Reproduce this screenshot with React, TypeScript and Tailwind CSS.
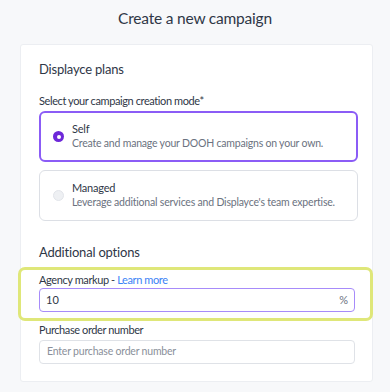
import React from "react";

export default function App() {
  return (
    <div
      className="w-[390px] h-[392px] bg-[#f7f8fa] overflow-hidden text-[#2d3748]"
      style={{ fontFamily: "Lato, 'Noto Sans', sans-serif" }}
    >
      <h1 className="text-center text-[15.5px] tracking-[-0.2px] text-[#2f3747] pt-[7px] h-[44px] leading-[22px]">
        Create a new campaign
      </h1>
      <div className="mx-[20px] w-[353px] h-[338px] bg-white rounded-[3px] border border-[#eceef2] px-[18px] pt-[14px]">
        <h2 className="text-[13px] tracking-[-0.2px] leading-[20px] text-[#2f3747]">Displayce plans</h2>
        <div className="mt-[14px] text-[11px] tracking-[-0.4px] leading-[16px] text-[#2f3747]">
          Select your campaign creation mode*
        </div>
        <div className="mt-[2px] flex flex-col gap-[8px] w-[319px]">
          <div className="h-[51px] rounded-[6px] border-2 border-[#8b5cf6] flex items-center pl-[12px]">
            <span className="w-[11px] h-[11px] rounded-full bg-[#6d28d9] flex items-center justify-center">
              <span className="w-[4px] h-[4px] rounded-full bg-white" />
            </span>
            <div className="ml-[8px] -mt-[2px]">
              <div className="text-[11px] tracking-[-0.2px] leading-[14px] text-[#2f3747]">Self</div>
              <div className="text-[10.5px] tracking-[-0.2px] leading-[14px] text-[#6b7280]">
                Create and manage your DOOH campaigns on your own.
              </div>
            </div>
          </div>
          <div className="h-[51px] rounded-[6px] border border-[#dcdfe5] flex items-center pl-[13px]">
            <span className="w-[11px] h-[11px] rounded-full bg-[#eef0f3] border border-[#e2e5ea]" />
            <div className="ml-[8px] -mt-[2px]">
              <div className="text-[11px] tracking-[-0.2px] leading-[14px] text-[#2f3747]">Managed</div>
              <div className="text-[10.5px] tracking-[-0.2px] leading-[14px] text-[#6b7280]">
                Leverage additional services and Displayce's team expertise.
              </div>
            </div>
          </div>
        </div>
        <h2 className="mt-[21px] text-[13px] tracking-[-0.2px] leading-[20px] text-[#2f3747]">Additional options</h2>
        <div className="mt-[5px] -mx-[21px] w-[355px] h-[54px] rounded-[7px] border-[3px] border-[#dfe779] px-[18px] pt-[2px]">
          <div className="text-[11px] tracking-[-0.4px] leading-[16px] text-[#2f3747]">
            Agency markup - <span className="text-[#3b82f6]">Learn more</span>
          </div>
          <div className="w-[316px] h-[24px] rounded-[4px] border-[1.5px] border-[#a78bfa] flex items-center justify-between px-[6px] text-[11px] text-[#2f3747]">
            <span>10</span>
            <span className="text-[#6b7280]">%</span>
          </div>
        </div>
        <div className="mt-[1px] text-[11px] tracking-[-0.4px] leading-[16px] text-[#2f3747]">Purchase order number</div>
        <div className="mt-[2px] w-[316px] h-[24px] rounded-[4px] border border-[#dfe2e7] flex items-center px-[7px] text-[10.5px] tracking-[-0.2px] text-[#8a909a]">
          Enter purchase order number
        </div>
      </div>
    </div>
  );
}
